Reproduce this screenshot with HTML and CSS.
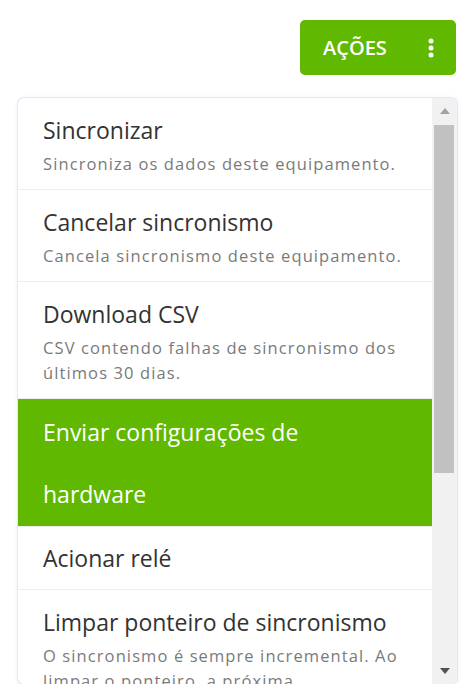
FILE: index.html
```html
<!DOCTYPE html>
<html lang="pt-BR">
<head>
  <meta charset="UTF-8" />
  <meta name="viewport" content="width=device-width, initial-scale=1.0">
  <title>Ações do equipamento</title>
  <link rel="stylesheet" href="styles.css">
</head>
<body>
  <div class="acoes">
    <button class="btn-acoes">
      <span>AÇÕES</span>
      <svg class="kebab" width="6" height="20" viewBox="0 0 6 20">
        <circle cx="3" cy="3" r="2.5" fill="#fff" />
        <circle cx="3" cy="10" r="2.5" fill="#fff" />
        <circle cx="3" cy="17" r="2.5" fill="#fff" />
      </svg>
    </button>

    <div class="painel">
      <ul class="menu">
        <li class="item">
          <div class="titulo">Sincronizar</div>
          <div class="descricao">Sincroniza os dados deste equipamento.</div>
        </li>
        <li class="item">
          <div class="titulo">Cancelar sincronismo</div>
          <div class="descricao">Cancela sincronismo deste equipamento.</div>
        </li>
        <li class="item">
          <div class="titulo">Download CSV</div>
          <div class="descricao">CSV contendo falhas de sincronismo dos últimos 30 dias.</div>
        </li>
        <li class="item simples ativo">
          <div class="titulo">Enviar configurações de hardware</div>
        </li>
        <li class="item simples">
          <div class="titulo">Acionar relé</div>
        </li>
        <li class="item">
          <div class="titulo">Limpar ponteiro de sincronismo</div>
          <div class="descricao">O sincronismo é sempre incremental. Ao limpar o ponteiro, a próxima sincronização buscará todos os registros.</div>
        </li>
        <li class="item">
          <div class="titulo">Reiniciar equipamento</div>
          <div class="descricao">Reinicia o equipamento remotamente.</div>
        </li>
      </ul>

      <div class="rolagem" aria-hidden="true">
        <div class="seta">
          <svg width="10" height="6" viewBox="0 0 10 6"><polygon points="5,0 10,6 0,6" fill="#a3a3a3" /></svg>
        </div>
        <div class="trilho">
          <div class="polegar"></div>
        </div>
        <div class="seta">
          <svg width="10" height="6" viewBox="0 0 10 6"><polygon points="0,0 10,0 5,6" fill="#505050" /></svg>
        </div>
      </div>
    </div>
  </div>
</body>
</html>
```

FILE: styles.css
```css
* {
  box-sizing: border-box;
  margin: 0;
  padding: 0;
}

body {
  font-family: 'Open Sans', 'Noto Sans', sans-serif;
  background-color: #ffffff;
  color: #333;
}

.acoes {
  width: 439px;
  margin-left: 18px;
  padding-top: 20px;
  display: flex;
  flex-direction: column;
}

.btn-acoes {
  align-self: flex-end;
  margin-right: 1px;
  width: 156px;
  height: 55px;
  padding: 0 22px 0 23px;
  display: flex;
  align-items: center;
  justify-content: space-between;
  background-color: #60b900;
  color: #fff;
  font-family: inherit;
  font-size: 20px;
  font-weight: 600;
  border: none;
  border-radius: 5px;
  cursor: pointer;
}

.painel {
  margin-top: 23px;
  height: 586px;
  display: flex;
  overflow: hidden;
  background-color: #fff;
  border-radius: 6px;
  box-shadow: 0 0 0 1px rgba(210, 210, 255, 0.5), 0 1px 5px rgba(120, 120, 230, 0.18);
}

.menu {
  list-style: none;
  flex: 1;
  overflow: hidden;
}

.item {
  padding: 17px 25px 13px;
  border-bottom: 1px solid #eeeeee;
  cursor: pointer;
}

.titulo {
  font-size: 23px;
  line-height: 30px;
  color: #333;
}

.descricao {
  margin-top: 6px;
  font-size: 16.5px;
  line-height: 25px;
  letter-spacing: 1.1px;
  color: #7a7a7a;
}

.item.simples {
  padding: 0 25px;
}

.item.simples .titulo {
  line-height: 62px;
}

.item.ativo {
  background-color: #60b900;
  padding: 2px 25px 1px;
}

.item.ativo .titulo {
  color: #fff;
}

/* barra de rolagem */
.rolagem {
  width: 25px;
  display: flex;
  flex-direction: column;
  background-color: #f1f1f1;
}

.seta {
  height: 26px;
  display: flex;
  align-items: center;
  justify-content: center;
}

.trilho {
  flex: 1;
  padding: 1px 3px 0 2px;
}

.polegar {
  height: 348px;
  background-color: #c1c1c1;
}
```
